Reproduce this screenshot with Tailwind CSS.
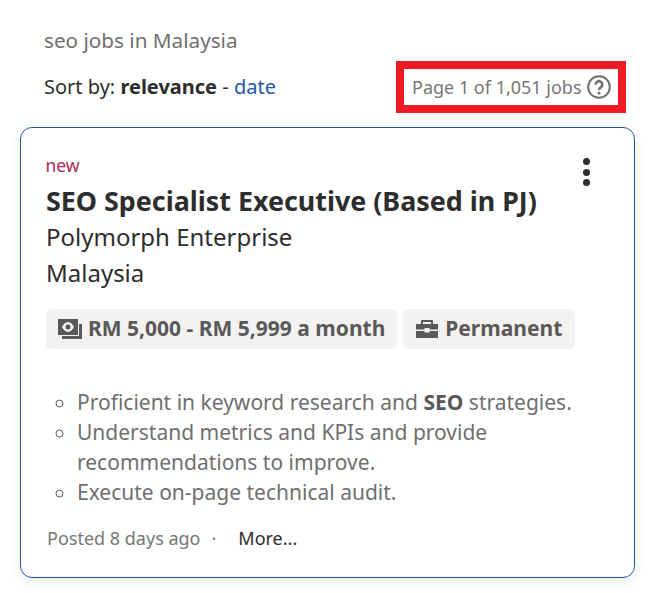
<!DOCTYPE html>
<html lang="en">
<head>
  <meta charset="UTF-8" />
  <title>seo jobs in Malaysia</title>
  <script src="https://cdn.jsdelivr.net/npm/@tailwindcss/browser@4"></script>
</head>
<body class="bg-white font-['Noto_Sans',sans-serif] w-[653px] h-[593px] overflow-hidden">
  <div class="pl-[20px] pr-[18px]">
    <!-- Header -->
    <div class="pl-[24px] pt-[26px] text-[20.7px] leading-[28px] text-[#6f6f6f]">seo jobs in Malaysia</div>
    <div class="flex items-center justify-between pl-[24px] pr-[9px] mt-[7px]">
      <div class="text-[20px] leading-[28px] text-[#2d2d2d]">Sort by: <b class="font-bold">relevance</b> - <span class="text-[#2557a7]">date</span></div>
      <div class="flex items-center h-[52px] w-[230px] border-[8px] border-[#ed1c24] pl-[8px] text-[18px] text-[#767676]">
        Page 1 of 1,051 jobs
        <svg class="ml-[5px]" width="24" height="24" viewBox="0 0 24 24" fill="none">
          <circle cx="12" cy="12" r="10.8" stroke="#6f6f6f" stroke-width="2"/>
          <path d="M8.7 9.6a3.300 3.300 0 1 1 5.200 2.600c-1.300.9-1.900 1.400-1.900 2.700" stroke="#6f6f6f" stroke-width="2.600"/>
          <circle cx="12" cy="18" r="1.600" fill="#6f6f6f"/>
        </svg>
      </div>
    </div>

    <!-- Job card -->
    <div class="relative mt-[14px] h-[451px] rounded-[12px] border border-[#2557a7] shadow-[0_4px_12px_rgba(0,0,0,0.08)] pl-[25px] pt-[25px]">
      <div class="absolute right-[44px] top-[30px] flex flex-col gap-[3.500px]">
        <span class="w-[7px] h-[7px] rounded-full bg-[#2d2d2d]"></span>
        <span class="w-[7px] h-[7px] rounded-full bg-[#2d2d2d]"></span>
        <span class="w-[7px] h-[7px] rounded-full bg-[#2d2d2d]"></span>
      </div>
      <div class="text-[17.5px] leading-[24px] text-[#a8285a] -ml-[0.5px]">new</div>
      <h2 class="text-[26.85px] leading-[36px] font-bold text-[#2d2d2d] mt-[6px]">SEO Specialist Executive (Based in PJ)</h2>
      <div class="text-[24px] leading-[36px] text-[#2d2d2d]">Polymorph Enterprise</div>
      <div class="text-[24px] leading-[36px] text-[#2d2d2d]">Malaysia</div>

      <div class="flex gap-[6px] mt-[18px]">
        <div class="flex items-center h-[40px] rounded-[6px] bg-[#f3f2f1] pl-[12px] pr-[12px] text-[21px] font-bold text-[#595959]">
          <svg class="mr-[6px]" width="24" height="20" viewBox="0 0 24 20" fill="#595959">
            <path fill-rule="evenodd" d="M0 0h20v16H0zM10 3C7.400 3 5.200 5.500 4 8c1.200 2.500 3.400 5 6 5s4.800-2.500 6-5c-1.200-2.500-3.400-5-6-5z"/>
            <circle cx="10" cy="8" r="2.500"/>
            <path d="M21 5h3v15H4v-3h17z"/>
          </svg>
          RM 5,000 - RM 5,999 a month
        </div>
        <div class="flex items-center h-[40px] rounded-[6px] bg-[#f3f2f1] pl-[13px] pr-[13px] text-[21px] font-bold text-[#595959]">
          <svg class="mr-[7px]" width="22" height="18" viewBox="0 0 22 18" fill="#595959">
            <path d="M6 0h10a1 1 0 0 1 1 1v3h-2V2H7v2H5V1a1 1 0 0 1 1-1z"/>
            <path d="M0 4h22v5.500H13.500V8h-5v1.500H0z"/>
            <path d="M0 11h8.500v1.500h5V11H22v7H0z"/>
          </svg>
          Permanent
        </div>
      </div>

      <ul class="mt-[38px] ml-[31px] pr-[40px] list-[circle] text-[21px] leading-[30px] text-[#6f6f6f] marker:text-[#595959]">
        <li>Proficient in keyword research and <b class="font-bold text-[#595959]">SEO</b> strategies.</li>
        <li>Understand metrics and KPIs and provide recommendations to improve.</li>
        <li>Execute on-page technical audit.</li>
      </ul>

      <div class="flex items-center mt-[19px] ml-[1px] text-[18px] leading-[24px]">
        <span class="text-[#767676]">Posted 8 days ago</span>
        <span class="text-[#767676] ml-[11px]">·</span>
        <span class="text-[#2d2d2d] ml-[22px]">More...</span>
      </div>
    </div>
  </div>
</body>
</html>
